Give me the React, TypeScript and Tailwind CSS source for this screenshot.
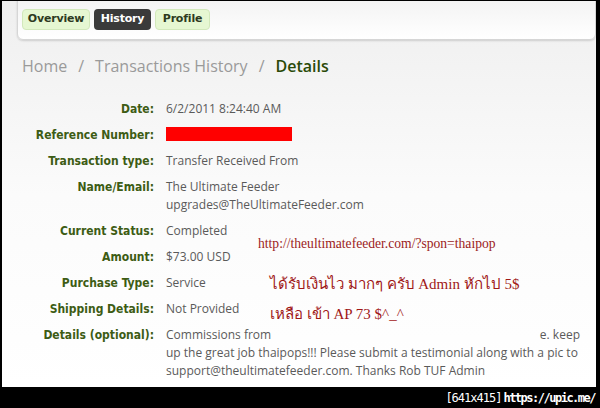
import React from "react";

const rows: { label: string; value: React.ReactNode }[] = [
  { label: "Date:", value: "6/2/2011 8:24:40 AM" },
  {
    label: "Reference Number:",
    value: <div className="mt-[1px] h-[14px] w-[126px] bg-[#ff0000]" />,
  },
  { label: "Transaction type:", value: "Transfer Received From" },
  {
    label: "Name/Email:",
    value: (
      <>
        <div>The Ultimate Feeder</div>
        <div>upgrades@TheUltimateFeeder.com</div>
      </>
    ),
  },
  { label: "Current Status:", value: "Completed" },
  { label: "Amount:", value: "$73.00 USD" },
  { label: "Purchase Type:", value: "Service" },
  { label: "Shipping Details:", value: "Not Provided" },
  {
    label: "Details (optional):",
    value: (
      <>
        <div className="flex justify-between pr-[2px]">
          <span>Commissions from</span>
          <span>e. keep</span>
        </div>
        <div>up the great job thaipops!!! Please submit a testimonial along with a pic to</div>
        <div>support@theultimatefeeder.com. Thanks Rob TUF Admin</div>
      </>
    ),
  },
];

export default function App() {
  return (
    <div className="w-[600px] h-[408px] bg-black pt-[1px] pl-[2px] pr-[4px] flex flex-col overflow-hidden">
      <div className="relative h-[386px] bg-gradient-to-b from-[#efefef] via-[#fbfbfb] to-white overflow-hidden">
        {/* tab panel */}
        <div className="ml-[15px] mt-[-6px] h-[45px] rounded-b-[6px] bg-gradient-to-b from-[#f2f2f2] to-white border border-[#d6d6d6] shadow-[0_1px_2px_rgba(0,0,0,0.15)] flex items-start gap-[4px] pl-[4px] pt-[13px] [font-family:'DejaVu_Sans',sans-serif]">
          <div className="h-[21px] w-[68px] rounded-[4px] bg-[#e6f7d2] border border-[#d2e8bb] flex items-center justify-center text-[11px] font-bold text-[#2e3a1e] tracking-[-0.2px]">
            Overview
          </div>
          <div className="h-[21px] w-[57px] rounded-[4px] bg-[#3a3a3a] flex items-center justify-center text-[11px] font-bold text-white tracking-[-0.2px]">
            History
          </div>
          <div className="h-[21px] w-[55px] rounded-[4px] bg-[#e6f7d2] border border-[#d2e8bb] flex items-center justify-center text-[11px] font-bold text-[#2e3a1e] tracking-[-0.2px]">
            Profile
          </div>
        </div>

        {/* breadcrumb */}
        <div className="mt-[16px] ml-[20px] flex items-center gap-[11px] text-[16px] leading-[20px] text-[#9a9a9a] [font-family:'Open_Sans',sans-serif]">
          <span>Home</span>
          <span>/</span>
          <span>Transactions History</span>
          <span>/</span>
          <span className="text-[#2a4a08] font-semibold">Details</span>
        </div>

        {/* detail rows */}
        <div className="mt-[24px] grid grid-cols-[152px_1fr] gap-x-[12px] gap-y-[8px] pr-[14px] text-[12px] leading-[18px]">
          {rows.map((r) => (
            <React.Fragment key={r.label}>
              <div className="text-right font-bold text-[#3d5c14] [font-family:'DejaVu_Sans_Condensed','DejaVu_Sans',sans-serif]">
                {r.label}
              </div>
              <div className="text-[#5a5a5a] [font-family:'Open_Sans',sans-serif]">{r.value}</div>
            </React.Fragment>
          ))}
        </div>

        {/* handwritten annotations */}
        <div className="absolute left-[256px] top-[233px] text-[13.6px] text-[#9b1b1b] [font-family:'Liberation_Serif',serif]">
          http://theultimatefeeder.com/?spon=thaipop
        </div>
        <div className="absolute left-[268px] top-[272px] text-[15px] text-[#a01818] [font-family:'Liberation_Serif','Noto_Sans_CJK_SC',serif]">
          ได้รับเงินไว มากๆ ครับ Admin หักไป 5$
        </div>
        <div className="absolute left-[268px] top-[302px] text-[15px] text-[#a01818] [font-family:'Liberation_Serif','Noto_Sans_CJK_SC',serif]">
          เหลือ เข้า AP 73 $^_^
        </div>
      </div>
      <div className="flex-1 flex items-center justify-end pr-[1px] text-white text-[12px]">
        <span className="[font-family:'DejaVu_Sans_Mono',monospace] tracking-[-1px]">[641x415]</span>
        <span className="ml-[2px] font-bold [font-family:'DejaVu_Sans_Mono',monospace] tracking-[-1.5px]">https://upic.me/</span>
      </div>
    </div>
  );
}
